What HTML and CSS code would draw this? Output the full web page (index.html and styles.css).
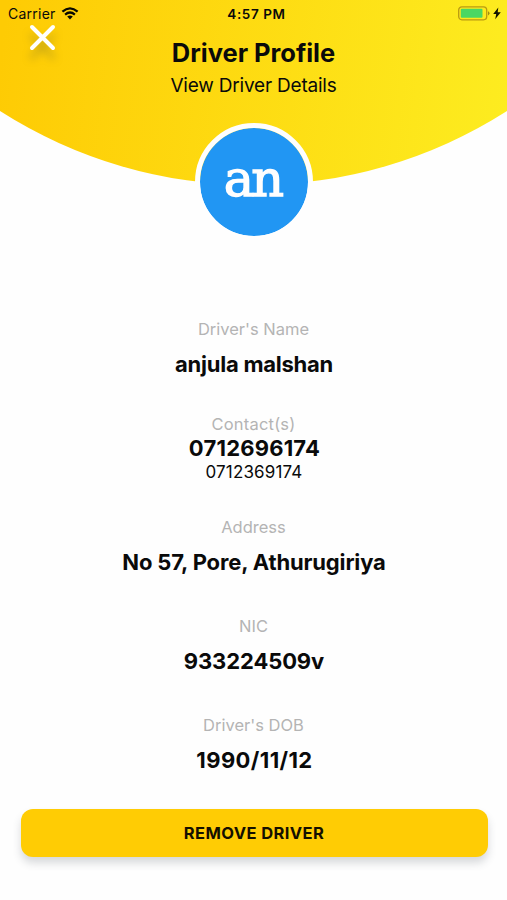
FILE: index.html
```html
<!DOCTYPE html>
<html lang="en">
<head>
<meta charset="utf-8">
<title>Driver Profile</title>
<link rel="stylesheet" href="styles.css">
</head>
<body>
<main class="screen">
  <header class="header">
    <svg class="header-bg" width="507" height="186" viewBox="0 0 507 186" aria-hidden="true">
      <defs>
        <linearGradient id="sun" gradientUnits="userSpaceOnUse" x1="0" y1="60" x2="507" y2="120">
          <stop offset="0" stop-color="#fecb04"/>
          <stop offset="1" stop-color="#fdec20"/>
        </linearGradient>
      </defs>
      <path d="M0 0H507V111A471 471 0 0 1 0 111Z" fill="url(#sun)"/>
    </svg>
    <div class="status">
      <div class="status-left">
        <span class="carrier">Carrier</span>
        <svg class="wifi" width="18" height="13" viewBox="0 0 18 13" aria-hidden="true">
          <g fill="none" stroke="#0a0a00" stroke-width="2.2">
            <path d="M1.4 4.7Q9 -1.9 16.6 4.7"/>
            <path d="M4.1 7.6Q9 3.4 13.9 7.6"/>
          </g>
          <path d="M6.2 9.5Q9 7.4 11.8 9.5L9 12.4Z" fill="#0a0a00"/>
        </svg>
      </div>
      <span class="time">4:57 PM</span>
      <div class="status-right">
        <svg class="battery" width="32" height="15" viewBox="0 0 32 15" aria-hidden="true">
          <rect x=".7" y=".8" width="28" height="13" rx="3.2" fill="none" stroke="#b99a12" stroke-width="1.3"/>
          <rect x="2.8" y="2.8" width="21.7" height="9" rx="1" fill="#4bd763"/>
          <path d="M30 5.2Q31.5 5.8 31.5 7.3T30 9.4Z" fill="#a28b13"/>
        </svg>
        <svg class="bolt" width="8" height="13" viewBox="0 0 8 13" aria-hidden="true">
          <path d="M5.3 .5L.2 7.1H3.2L2.2 12.3L7.8 5.3H4.7Z" fill="#111100"/>
        </svg>
      </div>
    </div>
    <div class="title-row">
      <svg class="close" width="50" height="50" viewBox="0 0 50 50" aria-label="Close">
        <path d="M14 14L35 35M35 14L14 35" stroke="#fff" stroke-width="4" stroke-linecap="round"/>
      </svg>
      <div class="titles">
        <h1 class="title">Driver Profile</h1>
        <p class="subtitle">View Driver Details</p>
      </div>
    </div>
    <div class="avatar"><span class="initials">an</span></div>
  </header>
  <dl class="details">
    <div class="item"><dt>Driver's Name</dt><dd class="name">anjula malshan</dd></div>
    <div class="item contacts"><dt>Contact(s)</dt><dd class="phone">0712696174</dd><dd class="secondary">0712369174</dd></div>
    <div class="item"><dt>Address</dt><dd class="address">No 57, Pore, Athurugiriya</dd></div>
    <div class="item"><dt>NIC</dt><dd class="nic">933224509v</dd></div>
    <div class="item last"><dt>Driver's DOB</dt><dd class="dob">1990/11/12</dd></div>
  </dl>
  <button class="remove" type="button">REMOVE DRIVER</button>
</main>
</body>
</html>
```
FILE: styles.css
```css
* { box-sizing: border-box; }
body { margin: 0; background: #fefefe; color: #0a0a0a; font-family: Inter, "Liberation Sans", sans-serif; }
h1, p, dl, dd { margin: 0; }
.screen { width: 507px; height: 900px; overflow: hidden; }
.header { position: relative; height: 241px; }
.header-bg { position: absolute; top: 0; left: 0; }
.status { position: relative; display: grid; grid-template-columns: 1fr auto 1fr; align-items: center; height: 27px; padding: 0 6px 0 8px; font-size: 14px; }
.status-left { display: flex; align-items: center; gap: 5px; }
.carrier { letter-spacing: .25px; }
.wifi { display: block; }
.time { font-weight: 600; font-size: 13.5px; letter-spacing: .6px; margin-left: 4px; }
.status-right { display: flex; align-items: center; justify-content: flex-end; gap: 3px; }
.title-row { position: relative; display: grid; grid-template-columns: 1fr; height: 96px; }
.close { grid-area: 1 / 1; margin: -14px 0 0 18px; overflow: visible; filter: drop-shadow(0 9px 4px rgba(90, 90, 50, .35)); }
.titles { grid-area: 1 / 1; text-align: center; padding-top: 9px; }
.title { font-size: 25.5px; line-height: 34px; font-weight: 700; letter-spacing: -.02px; }
.subtitle { font-size: 19px; line-height: 31px; letter-spacing: -.2px; }
.avatar { position: relative; width: 118px; height: 118px; margin: 0 auto; border: 5px solid #fefefe; border-radius: 50%; background: #2196f3; background-clip: padding-box; display: flex; align-items: center; justify-content: center; color: #fefefe; }
.initials { font-family: "DejaVu Serif", serif; font-size: 51px; line-height: 60px; letter-spacing: -3px; padding-bottom: 7px; margin-left: -2px; -webkit-text-stroke: 1.3px #fefefe; }
.details { padding-top: 76px; text-align: center; }
.item { height: 95px; }
.item.contacts { height: 103px; }
.item + .item + .item { height: 99px; }
.item.last.last.last { height: 96px; }
dt { font-size: 16.5px; line-height: 24px; color: #b4b4b4; }
dd { font-size: 22px; line-height: 24px; font-weight: 700; margin-top: 11px; padding-left: 1px; }
.name { letter-spacing: -.25px; }
.address { letter-spacing: -.15px; }
.nic { letter-spacing: -.1px; }
.dob { letter-spacing: .4px; padding-left: 2px; }
.phone { letter-spacing: .2px; padding-left: 2px; }
.contacts dt { letter-spacing: .2px; }
.contacts dd { margin-top: 0; }
dd.secondary { font-size: 17px; font-weight: 400; letter-spacing: .15px; }
.remove { display: block; width: 467px; height: 48px; margin: 0 0 0 20.5px; padding: 0; border: 0; border-radius: 12px; background: #ffcc04; color: #151000; font: 700 16.5px/48px Inter, sans-serif; letter-spacing: .42px; box-shadow: 0 6px 9px rgba(60, 70, 80, .2); }
```
